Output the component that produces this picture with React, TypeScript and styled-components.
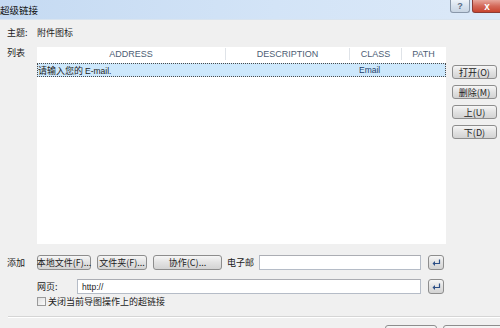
import React from 'react'
import styled, { createGlobalStyle, css } from 'styled-components'

const GlobalStyle = createGlobalStyle`
    html, body {
        margin: 0;
        padding: 0;
        background: #f0f0f0;
    }
    * {
        box-sizing: border-box;
    }
`

const CJK = `"Noto Sans CJK SC", "Microsoft YaHei", sans-serif`
const LATIN = `"Liberation Sans", Arial, sans-serif`

const winButton = css`
    height: 100%;
    border: 1px solid #8d8d8d;
    border-radius: 3px;
    background: linear-gradient(#f6f6f6, #e2e2e2 50%, #d3d3d3);
    color: #222;
    font-family: ${CJK};
    font-size: 9px;
    line-height: 1;
    padding: 0;
    display: flex;
    align-items: center;
    justify-content: center;
    white-space: nowrap;
`

const Window = styled.div`
    width: 500px;
    height: 328px;
    overflow: hidden;
    background: #f0f0f0;
    display: flex;
    flex-direction: column;
    font-family: ${CJK};
    font-size: 9px;
    color: #1b1b1b;
`

const TitleBar = styled.div`
    height: 20px;
    flex-shrink: 0;
    display: flex;
    justify-content: space-between;
    background: linear-gradient(90deg, #c5daf2, #d3e4f7 55%, #dce9f8);
    border-bottom: 1px solid #d9e4ef;
    > span {
        margin-left: 0;
        line-height: 20px;
        font-size: 9.5px;
        color: #111;
    }
`

const Caption = styled.div`
    display: flex;
    gap: 2px;
    height: 13px;
    margin-right: -2px;
`

const CaptionButton = styled.div<{ $close?: boolean }>`
    width: ${p => (p.$close ? '30px' : '20px')};
    height: 13px;
    border: 1px solid ${p => (p.$close ? '#8c3b34' : '#8a98aa')};
    border-top: none;
    border-radius: 0 0 3px 3px;
    background: ${p => (p.$close
        ? 'linear-gradient(#e7a79c, #d46a5a 50%, #c8442f)'
        : 'linear-gradient(#eef3f9, #d8e2ee 50%, #c9d5e3)')};
    color: ${p => (p.$close ? '#fff' : '#586b85')};
    font-family: ${LATIN};
    font-size: ${p => (p.$close ? '10px' : '9px')};
    font-weight: bold;
    display: flex;
    align-items: center;
    justify-content: center;
`

const Content = styled.div`
    flex: 1;
    display: flex;
    flex-direction: column;
    padding: 5px 4px 0 7px;
`

const Row = styled.div<{ $top: number; $height: number; $indent?: number }>`
    display: flex;
    align-items: center;
    height: ${p => p.$height}px;
    margin-top: ${p => p.$top}px;
    padding-left: ${p => p.$indent || 0}px;
    flex-shrink: 0;
`

const Label = styled.span<{ $width: number }>`
    width: ${p => p.$width}px;
    flex-shrink: 0;
    white-space: nowrap;
`

const ListRow = styled.div`
    display: flex;
    margin-top: 8px;
    height: 197px;
    flex-shrink: 0;
    > ${Label} {
        line-height: 11px;
    }
`

const ListBox = styled.div`
    width: 409px;
    height: 100%;
    background: #fff;
    display: flex;
    flex-direction: column;
`

const columns = '189px 124px 52px 43px'

const Header = styled.div`
    display: grid;
    grid-template-columns: ${columns};
    height: 15px;
    flex-shrink: 0;
`

const HeaderCell = styled.div<{ $last?: boolean }>`
    font-family: ${LATIN};
    font-size: 9px;
    color: #4c5d74;
    display: flex;
    align-items: center;
    justify-content: center;
    border-right: ${p => (p.$last ? 'none' : '1px solid #dfe3e8')};
    margin: 1px 0 2px;
`

const SelectedRow = styled.div`
    display: grid;
    grid-template-columns: ${columns};
    height: 14px;
    margin-top: 1px;
    background: #cde8fc;
    border: 1px dotted #4a4a4a;
    align-items: center;
    > span {
        white-space: nowrap;
        overflow: hidden;
    }
`

const Latin = styled.span`
    font-family: ${LATIN};
    font-size: 8.5px;
`

const ClassCell = styled.span`
    font-family: ${LATIN};
    font-size: 8.5px;
    color: #23406b;
    padding-left: 8px;
`

const SideButtons = styled.div`
    margin-left: 6px;
    padding-top: 18px;
    display: flex;
    flex-direction: column;
    gap: 6px;
`

const SideButton = styled.button`
    ${winButton}
    width: 45px;
    height: 14px;
    flex: none;
`

const PushButton = styled.button<{ $width: number }>`
    ${winButton}
    width: ${p => p.$width}px;
    flex-shrink: 0;
`

const TextBox = styled.div<{ $width: number }>`
    width: ${p => p.$width}px;
    height: 100%;
    flex-shrink: 0;
    background: #fff;
    border: 1px solid #b5bcc7;
    border-top-color: #abadb3;
    display: flex;
    align-items: center;
    padding-left: 4px;
    font-family: ${LATIN};
    font-size: 8.5px;
    color: #222;
`

const EnterButton = styled.button`
    ${winButton}
    width: 16px;
    margin-left: 7px;
    flex-shrink: 0;
    color: #2d4f86;
`

const CheckBox = styled.span`
    width: 9px;
    height: 9px;
    margin: 0 2px 0 8px;
    border: 1px solid #9a9a9a;
    background: linear-gradient(135deg, #e0e0e0, #fbfbfb);
    flex-shrink: 0;
`

const Separator = styled.div`
    height: 2px;
    margin: 9px -4px 0 1px;
    border-top: 1px solid #d5d5d5;
    border-bottom: 1px solid #fff;
    flex-shrink: 0;
`

const Footer = styled.div`
    display: flex;
    justify-content: flex-end;
    gap: 6px;
    margin: 7px -23px 0 0;
    height: 20px;
    flex-shrink: 0;
`

const EnterIcon = () => (
    <svg width="9" height="8" viewBox="0 0 9 8">
        <path d="M7.5 0.5 V4.5 H2" stroke="#2d4f86" strokeWidth="1.2" fill="none" />
        <path d="M0.5 4.5 L3 2 V7 Z" fill="#2d4f86" />
    </svg>
)

const App: React.FC = () => {
    return (
        <>
            <GlobalStyle />
            <Window>
                <TitleBar>
                    <span>超级链接</span>
                    <Caption>
                        <CaptionButton>?</CaptionButton>
                        <CaptionButton $close>x</CaptionButton>
                    </Caption>
                </TitleBar>

                <Content>
                    <Row $top={0} $height={14}>
                        <Label $width={30}>主题:</Label>
                        <span>附件图标</span>
                    </Row>

                    <ListRow>
                        <Label $width={30}>列表</Label>
                        <ListBox>
                            <Header>
                                <HeaderCell>ADDRESS</HeaderCell>
                                <HeaderCell>DESCRIPTION</HeaderCell>
                                <HeaderCell>CLASS</HeaderCell>
                                <HeaderCell $last>PATH</HeaderCell>
                            </Header>
                            <SelectedRow>
                                <span>请输入您的 <Latin>E-mail.</Latin></span>
                                <span />
                                <ClassCell>Email</ClassCell>
                                <span />
                            </SelectedRow>
                        </ListBox>
                        <SideButtons>
                            <SideButton>打开(O)</SideButton>
                            <SideButton>删除(M)</SideButton>
                            <SideButton>上(U)</SideButton>
                            <SideButton>下(D)</SideButton>
                        </SideButtons>
                    </ListRow>

                    <Row $top={11} $height={15}>
                        <Label $width={30}>添加</Label>
                        <PushButton $width={54}>本地文件(F)...</PushButton>
                        <PushButton $width={50} style={{ marginLeft: 6 }}>文件夹(F)...</PushButton>
                        <PushButton $width={69} style={{ marginLeft: 6 }}>协作(C)...</PushButton>
                        <Label $width={32} style={{ marginLeft: 5 }}>电子邮</Label>
                        <TextBox $width={162} />
                        <EnterButton><EnterIcon /></EnterButton>
                    </Row>

                    <Row $top={9} $height={15} $indent={30}>
                        <Label $width={40}>网页:</Label>
                        <TextBox $width={344}>http://</TextBox>
                        <EnterButton><EnterIcon /></EnterButton>
                    </Row>

                    <Row $top={2} $height={11} $indent={22}>
                        <CheckBox />
                        <span>关闭当前导图操作上的超链接</span>
                    </Row>

                    <Separator />

                    <Footer>
                        <PushButton $width={52} />
                        <PushButton $width={76} />
                    </Footer>
                </Content>
            </Window>
        </>
    )
}

export default App
